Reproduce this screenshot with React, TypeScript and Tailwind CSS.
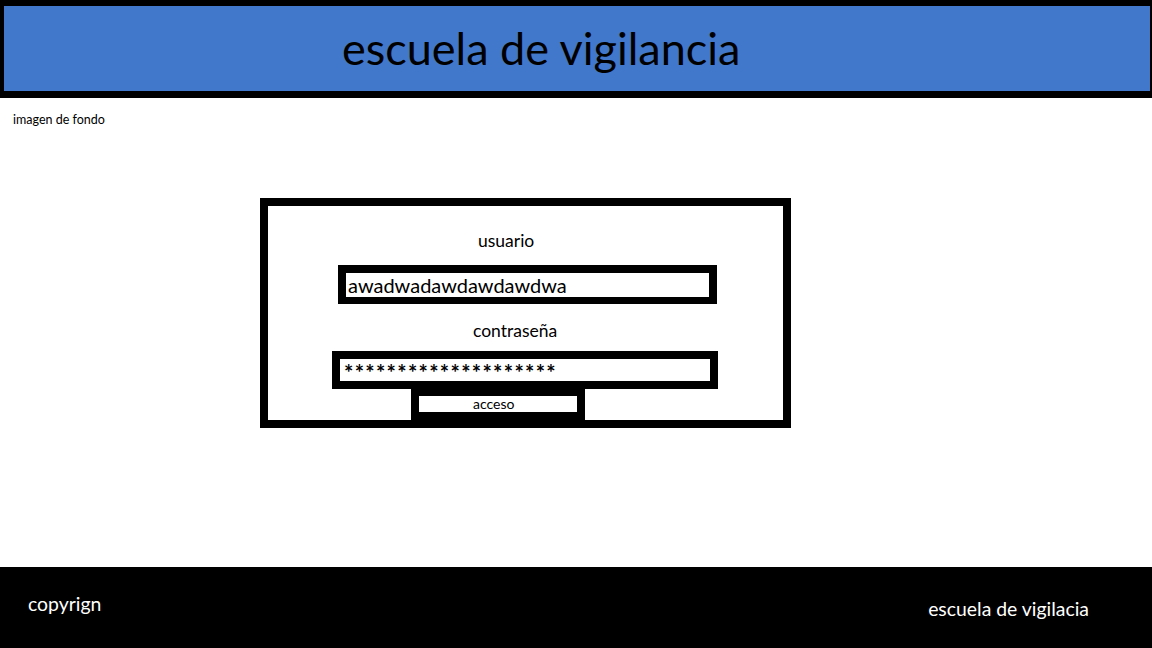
import React from "react";

const font = { fontFamily: "Lato, 'Open Sans', sans-serif" };

export default function App() {
  return (
    <div
      className="w-[1152px] h-[648px] flex flex-col bg-white overflow-hidden text-black"
      style={font}
    >
      {/* header */}
      <header className="h-[98px] shrink-0 bg-black pt-[6px] pb-[7px] pl-[4px] pr-[2px]">
        <div className="h-full bg-[#4178cb] pt-[20px] pl-[338px]">
          <h1 className="text-[45px] leading-[45px] font-normal">escuela de vigilancia</h1>
        </div>
      </header>

      {/* main */}
      <main className="flex-1 flex flex-col">
        <div className="h-[100px] shrink-0 pl-[13px] pt-[16px]">
          <p className="text-[12.5px] leading-[12.5px]">imagen de fondo</p>
        </div>

        <div className="ml-[260px] w-[531px] h-[230px] border-[8px] border-black flex flex-col items-start">
          <div className="ml-[210px] mt-[26px] text-[17.5px] leading-[18px]">usuario</div>

          <div className="ml-[70px] mt-[15px] w-[379px] h-[39px] border-[8px] border-b-[7px] border-black bg-white pl-[2px] text-[20px] leading-[24px]">
            awadwadawdawdawdwa
          </div>

          <div className="ml-[205px] mt-[18px] text-[17.5px] leading-[18px]">contraseña</div>

          <div className="ml-[64px] mt-[11px] w-[386px] h-[38px] border-[8px] border-black bg-white pl-[4px] text-[22px] leading-[27px] tracking-[1.3px] font-bold">
            ********************
          </div>

          <button className="ml-[143px] w-[174px] h-[31px] border-[8px] border-t-[7px] border-black bg-white pl-[54px] text-left text-[14px] leading-[16px]">
            acceso
          </button>
        </div>
      </main>

      {/* footer */}
      <footer className="h-[81px] shrink-0 bg-black text-white flex justify-between items-start pl-[28px] pr-[63px]">
        <span className="mt-[27px] text-[19.4px] leading-[20px]">copyrign</span>
        <span className="mt-[32px] text-[19.4px] leading-[20px]">escuela de vigilacia</span>
      </footer>
    </div>
  );
}
